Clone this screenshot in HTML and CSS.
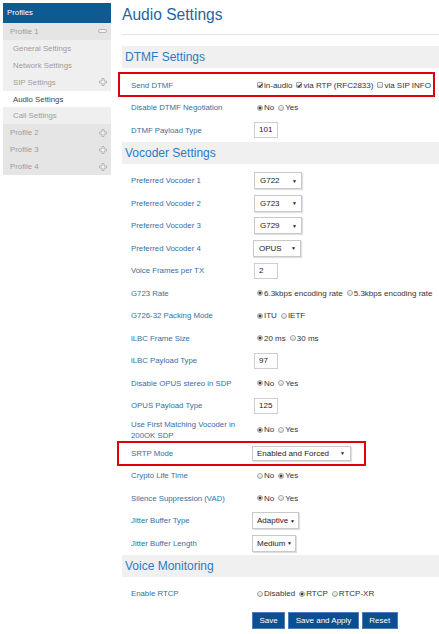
FILE: index.html
```html
<!DOCTYPE html>
<html>

  <head>
    <meta charset="UTF-8">
    <title>Audio Settings</title>
    <link rel="stylesheet" href="styles.css">
  </head>

  <body>
    <div id="page">

      <div id="side">
        <div class="sideHead">Profiles</div>
        <div class="profile">Profile 1
          <svg class="ico" width="9" height="4" viewBox="0 0 9 4"><rect x="0.5" y="0.5" width="8" height="3" rx="1.5" fill="#f2f2f2" stroke="#aaa" stroke-width="0.8"/></svg>
        </div>
        <div class="sub">General Settings</div>
        <div class="sub">Network Settings</div>
        <div class="sub">SIP Settings
          <svg class="ico" width="8" height="8" viewBox="0 0 8 8"><path d="M3 0.5h2v2.5h2.5v2h-2.5v2.5h-2v-2.5h-2.5v-2h2.5z" fill="#f4f4f4" stroke="#aaa" stroke-width="0.8"/></svg>
        </div>
        <div class="sub active">Audio Settings</div>
        <div class="sub">Call Settings</div>
        <div class="profile">Profile 2
          <svg class="ico" width="8" height="8" viewBox="0 0 8 8"><path d="M3 0.5h2v2.5h2.5v2h-2.5v2.5h-2v-2.5h-2.5v-2h2.5z" fill="#f4f4f4" stroke="#aaa" stroke-width="0.8"/></svg>
        </div>
        <div class="profile">Profile 3
          <svg class="ico" width="8" height="8" viewBox="0 0 8 8"><path d="M3 0.5h2v2.5h2.5v2h-2.5v2.5h-2v-2.5h-2.5v-2h2.5z" fill="#f4f4f4" stroke="#aaa" stroke-width="0.8"/></svg>
        </div>
        <div class="profile">Profile 4
          <svg class="ico" width="8" height="8" viewBox="0 0 8 8"><path d="M3 0.5h2v2.5h2.5v2h-2.5v2.5h-2v-2.5h-2.5v-2h2.5z" fill="#f4f4f4" stroke="#aaa" stroke-width="0.8"/></svg>
        </div>
      </div>

      <div id="main">
        <h1 class="title">Audio Settings</h1>

        <div class="section">DTMF Settings</div>
        <div class="rows">
          <div class="row marked markDtmf">
            <div class="label">Send DTMF</div>
            <div class="ctrl">
              <span class="opt"><span class="check"><svg width="5" height="5" viewBox="0 0 5 5"><path d="M0.6 2.6 L1.9 3.9 L4.4 0.8" fill="none" stroke="#333" stroke-width="1.1"/></svg></span>in-audio</span>
              <span class="opt"><span class="check"><svg width="5" height="5" viewBox="0 0 5 5"><path d="M0.6 2.6 L1.9 3.9 L4.4 0.8" fill="none" stroke="#333" stroke-width="1.1"/></svg></span>via RTP (RFC2833)</span>
              <span class="opt"><span class="check"></span>via SIP INFO</span>
            </div>
          </div>
          <div class="row">
            <div class="label">Disable DTMF Negotiation</div>
            <div class="ctrl">
              <span class="opt"><span class="radio on"></span>No</span>
              <span class="opt"><span class="radio"></span>Yes</span>
            </div>
          </div>
          <div class="row">
            <div class="label">DTMF Payload Type</div>
            <div class="ctrl"><span class="text">101</span></div>
          </div>
        </div>

        <div class="section">Vocoder Settings</div>
        <div class="rows">
          <div class="row">
            <div class="label">Preferred Vocoder 1</div>
            <div class="ctrl"><span class="select w48">G722<i>&#9660;</i></span></div>
          </div>
          <div class="row">
            <div class="label">Preferred Vocoder 2</div>
            <div class="ctrl"><span class="select w48">G723<i>&#9660;</i></span></div>
          </div>
          <div class="row">
            <div class="label">Preferred Vocoder 3</div>
            <div class="ctrl"><span class="select w48">G729<i>&#9660;</i></span></div>
          </div>
          <div class="row">
            <div class="label">Preferred Vocoder 4</div>
            <div class="ctrl"><span class="select w48 left1">OPUS<i>&#9660;</i></span></div>
          </div>
          <div class="row">
            <div class="label">Voice Frames per TX</div>
            <div class="ctrl"><span class="text">2</span></div>
          </div>
          <div class="row">
            <div class="label">G723 Rate</div>
            <div class="ctrl">
              <span class="opt"><span class="radio on"></span>6.3kbps encoding rate</span>
              <span class="opt"><span class="radio"></span>5.3kbps encoding rate</span>
            </div>
          </div>
          <div class="row">
            <div class="label">G726-32 Packing Mode</div>
            <div class="ctrl">
              <span class="opt"><span class="radio on"></span>ITU</span>
              <span class="opt"><span class="radio"></span>IETF</span>
            </div>
          </div>
          <div class="row">
            <div class="label">iLBC Frame Size</div>
            <div class="ctrl">
              <span class="opt"><span class="radio on"></span>20 ms</span>
              <span class="opt"><span class="radio"></span>30 ms</span>
            </div>
          </div>
          <div class="row">
            <div class="label">iLBC Payload Type</div>
            <div class="ctrl"><span class="text">97</span></div>
          </div>
          <div class="row">
            <div class="label">Disable OPUS stereo in SDP</div>
            <div class="ctrl">
              <span class="opt"><span class="radio on"></span>No</span>
              <span class="opt"><span class="radio"></span>Yes</span>
            </div>
          </div>
          <div class="row">
            <div class="label">OPUS Payload Type</div>
            <div class="ctrl"><span class="text">125</span></div>
          </div>
          <div class="row tall">
            <div class="label">Use First Matching Vocoder in 200OK SDP</div>
            <div class="ctrl">
              <span class="opt"><span class="radio on"></span>No</span>
              <span class="opt"><span class="radio"></span>Yes</span>
            </div>
          </div>
          <div class="row marked markSrtp">
            <div class="label">SRTP Mode</div>
            <div class="ctrl"><span class="select w100 short">Enabled and Forced<i>&#9660;</i></span></div>
          </div>
          <div class="row">
            <div class="label">Crypto Life Time</div>
            <div class="ctrl">
              <span class="opt"><span class="radio"></span>No</span>
              <span class="opt"><span class="radio on"></span>Yes</span>
            </div>
          </div>
          <div class="row">
            <div class="label">Silence Suppression (VAD)</div>
            <div class="ctrl">
              <span class="opt"><span class="radio on"></span>No</span>
              <span class="opt"><span class="radio"></span>Yes</span>
            </div>
          </div>
          <div class="row">
            <div class="label">Jitter Buffer Type</div>
            <div class="ctrl"><span class="select w47">Adaptive<i>&#9660;</i></span></div>
          </div>
          <div class="row">
            <div class="label">Jitter Buffer Length</div>
            <div class="ctrl"><span class="select w44">Medium<i>&#9660;</i></span></div>
          </div>
        </div>

        <div class="section">Voice Monitoring</div>
        <div class="rows">
          <div class="row">
            <div class="label">Enable RTCP</div>
            <div class="ctrl">
              <span class="opt"><span class="radio"></span>Disabled</span>
              <span class="opt"><span class="radio on"></span>RTCP</span>
              <span class="opt"><span class="radio"></span>RTCP-XR</span>
            </div>
          </div>
        </div>

        <div id="buttons">
          <button class="btn">Save</button>
          <button class="btn">Save and Apply</button>
          <button class="btn">Reset</button>
        </div>
      </div>

    </div>
  </body>

</html>
```

FILE: styles.css
```css
body {
  margin: 0;
  background: #fff;
  font-family: "Liberation Sans", Arial, sans-serif;
}

#page {
  display: flex;
  align-items: flex-start;
}

/* left menu */

#side {
  width: 108px;
  margin: 3px 0 0 3px;
  font-size: 7.8px;
}

.sideHead {
  background: #0d5b92;
  color: #fff;
  height: 20px;
  line-height: 20px;
  padding-left: 4px;
}

.profile,
.sub {
  display: flex;
  align-items: center;
  justify-content: space-between;
  height: 16.9px;
  color: #9d9d9d;
  padding-right: 4px;
}

.profile {
  background: #e5e5e5;
  padding-left: 7px;
}

.sub {
  background: #efefef;
  padding-left: 10px;
}

.sub.active {
  background: #fff;
  color: #444;
}

/* content */

#main {
  flex: 1;
  margin-left: 11px;
}

.title {
  margin: 5px 0 11px 0;
  padding-bottom: 9px;
  border-bottom: 1px solid #e6e6e6;
  font-size: 15.6px;
  line-height: 20px;
  font-weight: normal;
  color: #27659c;
}

.section {
  background: #f0f0f0;
  height: 22px;
  line-height: 22px;
  padding-left: 3px;
  font-size: 12px;
  color: #2a7bc4;
  margin-bottom: 6px;
}

.row {
  display: flex;
  align-items: center;
  height: 22.5px;
  padding-left: 9px;
  position: relative;
}

.row.tall {
  height: 25px;
}

.label {
  flex: 0 0 123px;
  box-sizing: border-box;
  padding-right: 12px;
  font-size: 7.8px;
  line-height: 11px;
  color: #3370a3;
}

.ctrl {
  display: flex;
  align-items: center;
  font-size: 8px;
  color: #333;
}

.opt {
  display: inline-flex;
  align-items: center;
  margin-left: 3px;
  margin-right: 1px;
}

.check,
.radio {
  display: inline-block;
  box-sizing: border-box;
  width: 6px;
  height: 6px;
  margin-right: 1px;
  border: 1px solid #a4a4a4;
  background: linear-gradient(#fbfbfb, #d9d9d9);
}

.check {
  border-radius: 1px;
}

.check svg {
  display: block;
  margin: -0.5px 0 0 -0.5px;
}

.radio {
  border-radius: 50%;
}

.radio.on {
  background: radial-gradient(circle, #404040 0, #404040 1.2px, #dcdcdc 1.7px, #f2f2f2 100%);
}

.text {
  display: inline-block;
  box-sizing: border-box;
  width: 24px;
  height: 16px;
  line-height: 14px;
  padding-left: 4px;
  border: 1px solid #cfcfcf;
  color: #222;
}

.select {
  display: inline-flex;
  align-items: center;
  justify-content: space-between;
  box-sizing: border-box;
  height: 17px;
  padding: 0 3px 0 4px;
  border: 1px solid #c9c9c9;
  box-shadow: 1px 1px 1px rgba(0, 0, 0, 0.12);
  color: #222;
}

.select i {
  font-style: normal;
  font-size: 5px;
  color: #222;
}

.w48 {
  width: 48px;
  padding-left: 5px;
  padding-right: 4px;
}

.w47 {
  width: 47px;
  margin-left: -2px;
}

.w44 {
  width: 44px;
  margin-left: -2px;
}

.w100 {
  width: 99px;
  margin-left: -2px;
  padding-right: 5px;
}

.short {
  height: 15px;
}

.left1 {
  margin-left: -1px;
}

/* red marks over the rows */

.marked::after {
  content: "";
  position: absolute;
  border: 2px solid #e0000b;
}

.markDtmf::after {
  top: -2px;
  bottom: 0;
  left: -4px;
  right: 4px;
}

.markSrtp::after {
  top: -1px;
  bottom: -1px;
  left: -5px;
  width: 245px;
}

#buttons {
  display: flex;
  gap: 3px;
  margin: 6.5px 0 0 130px;
}

.btn {
  height: 17.5px;
  padding: 0 6.5px;
  background: #0c4f90;
  border: 1px solid #4a7fb8;
  color: #fff;
  font-family: "Liberation Sans", Arial, sans-serif;
  font-size: 8px;
}
```
